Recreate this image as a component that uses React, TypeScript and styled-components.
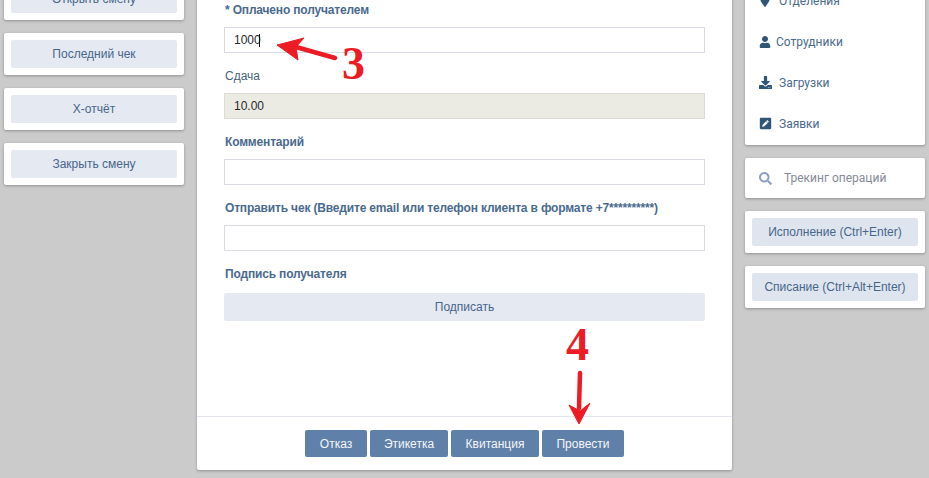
import styled, { createGlobalStyle } from "styled-components";
import { FaDownload, FaMapMarker, FaPenSquare, FaSearch, FaUser } from "react-icons/fa";
import type { ReactNode } from "react";

const GlobalStyle = createGlobalStyle`
  html, body {
    margin: 0;
    height: 478px;
    overflow: hidden;
    background: #cbcbcb;
  }
  * { box-sizing: border-box; }
`;

const Page = styled.div`
  position: relative;
  display: grid;
  grid-template-columns: 180px 535px 180px;
  column-gap: 13px;
  align-items: start;
  margin-top: -22px;
  padding-left: 4px;
  font-family: "Liberation Sans", Arial, sans-serif;
  font-size: 12px;
`;

const Column = styled.div`
  display: flex;
  flex-direction: column;
  gap: 13px;
`;

const Card = styled.div`
  background: #fff;
  border-radius: 2px;
  box-shadow: 0 1px 3px rgba(0, 0, 0, 0.3);
`;

const ButtonCard = styled(Card)`
  padding: 7px;
`;

const SoftButton = styled.button<{ $dark?: boolean }>`
  display: block;
  width: 100%;
  height: 28px;
  border: 0;
  border-radius: 2px;
  background: ${({ $dark }) => ($dark ? "#dfe5ee" : "#e5e9f1")};
  color: #47668c;
  font: inherit;
  text-align: center;
  padding: 0;
`;

const Panel = styled(Card)`
  display: flex;
  flex-direction: column;
  height: 492px;
`;

const Form = styled.div`
  flex: 1;
  padding: 23px 27px 0;
`;

const Field = styled.div`
  position: relative;
  margin-bottom: 14px;
`;

const Label = styled.div<{ $bold?: boolean }>`
  height: 18px;
  line-height: 18px;
  margin-bottom: 8px;
  padding-left: 1px;
  color: ${({ $bold }) => ($bold ? "#4a6a8e" : "#47627f")};
  font-weight: ${({ $bold }) => ($bold ? 700 : 400)};
  letter-spacing: ${({ $bold }) => ($bold ? "-0.17px" : "0")};
  white-space: nowrap;
`;

const Input = styled.input<{ $disabled?: boolean }>`
  display: block;
  width: 481px;
  height: 26px;
  padding: 0 9px;
  border: 1px solid ${({ $disabled }) => ($disabled ? "#dcdcd4" : "#d8dbe4")};
  border-radius: 0;
  outline: none;
  background: ${({ $disabled }) => ($disabled ? "#ebebe4" : "#fff")};
  color: #2a2a2a;
  font: inherit;
`;

const Caret = styled.span`
  position: absolute;
  left: 35px;
  top: 33px;
  width: 1px;
  height: 13px;
  background: #111;
`;

const SignButton = styled(SoftButton)`
  width: 481px;
  margin-top: 10px;
`;

const Footer = styled.div`
  display: flex;
  justify-content: center;
  gap: 3px;
  padding: 13px 0;
  border-top: 1px solid #e3e6ee;
`;

const ActionButton = styled.button<{ $width: number }>`
  width: ${({ $width }) => $width}px;
  height: 27px;
  border: 0;
  border-radius: 2px;
  background: #5f80a8;
  color: #f4f6fa;
  font: inherit;
  padding: 0;
`;

const NavCard = styled(Card)`
  height: 167px;
  padding-top: 2px;
`;

const NavItem = styled.div`
  display: flex;
  align-items: center;
  height: 41px;
  padding-left: 14px;
  color: #4a6a8e;
  font-family: Roboto, sans-serif;
  svg {
    color: #2f5577;
    flex: none;
  }
`;

const NavText = styled.span<{ $gap: number }>`
  margin-left: ${({ $gap }) => $gap}px;
`;

const SearchCard = styled(Card)`
  display: flex;
  align-items: center;
  height: 40px;
  padding-left: 14px;
  color: #858b99;
  font-family: Roboto, sans-serif;
  svg {
    color: #8fa3bf;
    margin-right: 12px;
  }
`;

const Mark = styled.div<{ $left: number; $top: number }>`
  position: absolute;
  left: ${({ $left }) => $left}px;
  top: ${({ $top }) => $top + 22}px;
  color: #ed1c24;
  font-family: "Liberation Serif", serif;
  font-weight: 700;
  font-size: 46px;
  line-height: 46px;
`;

const Overlay = styled.svg`
  position: absolute;
  left: 0;
  top: 22px;
  pointer-events: none;
`;

function FormField({
  label,
  bold,
  children,
}: {
  label: string;
  bold?: boolean;
  children: ReactNode;
}) {
  return (
    <Field>
      <Label $bold={bold}>{label}</Label>
      {children}
    </Field>
  );
}

export default function App() {
  return (
    <>
      <GlobalStyle />
      <Page>
        <Column>
          <ButtonCard>
            <SoftButton>Открыть смену</SoftButton>
          </ButtonCard>
          <ButtonCard>
            <SoftButton>Последний чек</SoftButton>
          </ButtonCard>
          <ButtonCard>
            <SoftButton>Х-отчёт</SoftButton>
          </ButtonCard>
          <ButtonCard>
            <SoftButton>Закрыть смену</SoftButton>
          </ButtonCard>
        </Column>

        <Panel>
          <Form>
            <FormField label="* Оплачено получателем" bold>
              <Input defaultValue="1000" readOnly />
              <Caret />
            </FormField>
            <FormField label="Сдача">
              <Input $disabled defaultValue="10.00" readOnly />
            </FormField>
            <FormField label="Комментарий" bold>
              <Input readOnly />
            </FormField>
            <FormField label="Отправить чек (Введите email или телефон клиента в формате +7**********)" bold>
              <Input readOnly />
            </FormField>
            <FormField label="Подпись получателя" bold>
              <SignButton>Подписать</SignButton>
            </FormField>
          </Form>
          <Footer>
            <ActionButton $width={62}>Отказ</ActionButton>
            <ActionButton $width={78}>Этикетка</ActionButton>
            <ActionButton $width={88}>Квитанция</ActionButton>
            <ActionButton $width={82}>Провести</ActionButton>
          </Footer>
        </Panel>

        <Column>
          <NavCard>
            <NavItem>
              <FaMapMarker size={12} />
              <NavText $gap={8}>Отделения</NavText>
            </NavItem>
            <NavItem>
              <FaUser size={12} />
              <NavText $gap={5}>Сотрудники</NavText>
            </NavItem>
            <NavItem>
              <FaDownload size={13} />
              <NavText $gap={7}>Загрузки</NavText>
            </NavItem>
            <NavItem>
              <FaPenSquare size={13} />
              <NavText $gap={7}>Заявки</NavText>
            </NavItem>
          </NavCard>
          <SearchCard>
            <FaSearch size={13} />
            Трекинг операций
          </SearchCard>
          <ButtonCard>
            <SoftButton $dark>Исполнение (Ctrl+Enter)</SoftButton>
          </ButtonCard>
          <ButtonCard>
            <SoftButton $dark>Списание (Ctrl+Alt+Enter)</SoftButton>
          </ButtonCard>
        </Column>

        <Mark $left={342} $top={41}>3</Mark>
        <Mark $left={566} $top={322}>4</Mark>
        <Overlay width="929" height="478" viewBox="0 0 929 478">
          <path d="M335 58 L296 47" stroke="#ed1c24" strokeWidth="4.5" strokeLinecap="round" fill="none" />
          <path d="M277 45 L304 38 L296 47 L298 60 Z" fill="#ed1c24" stroke="#ed1c24" strokeLinejoin="round" />
          <path d="M580 373 L579 408" stroke="#ed1c24" strokeWidth="4.5" strokeLinecap="round" fill="none" />
          <path d="M579 424 L569 405 L580 411 L590 403 Z" fill="#ed1c24" stroke="#ed1c24" strokeLinejoin="round" />
        </Overlay>
      </Page>
    </>
  );
}
